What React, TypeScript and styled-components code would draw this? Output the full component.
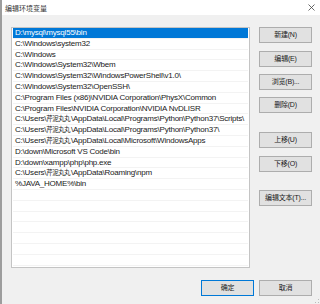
import styled, { createGlobalStyle } from "styled-components";

const GlobalStyle = createGlobalStyle`
  html, body {
    margin: 0;
    padding: 0;
    background: #f0f0f0;
  }
  * {
    box-sizing: border-box;
  }
`;

const Screen = styled.div`
  width: 320px;
  height: 304px;
  display: flex;
  overflow: hidden;
  font-family: "Liberation Sans", "Noto Sans CJK SC", sans-serif;
  font-size: 8px;
  color: #1a1a1a;
`;

const BackEdge = styled.div`
  width: 2px;
  background: #9d9d9d;
`;

const Dialog = styled.div`
  position: relative;
  flex: 1;
  display: flex;
  flex-direction: column;
  background: #f0f0f0;
`;

const TitleBar = styled.div`
  height: 15px;
  display: flex;
  align-items: center;
  justify-content: space-between;
  padding: 0 5px 0 3px;
  background: #ffffff;
  color: #333;
  font-size: 7px;
`;

const Body = styled.div`
  display: flex;
  gap: 9px;
  padding: 12px 8px 0 9px;
`;

const PathList = styled.div`
  width: 239px;
  height: 241px;
  border: 1px solid #c4c4c4;
  background: #ffffff;
  padding: 0 1px;
  overflow: hidden;
`;

const Row = styled.div<{ $selected?: boolean }>`
  height: 10.8px;
  line-height: 10.8px;
  padding-left: 2px;
  white-space: nowrap;
  overflow: hidden;
  letter-spacing: -0.22px;
  border-bottom: 1px solid #f3f3f3;
  background: ${(p) => (p.$selected ? "#0078d7" : "transparent")};
  color: ${(p) => (p.$selected ? "#ffffff" : "#1a1a1a")};
`;

const Cjk = styled.span`
  font-size: 6.5px;
  letter-spacing: -0.6px;
  margin-right: 1px;
`;

const Side = styled.div`
  display: flex;
  flex-direction: column;
`;

const Button = styled.button<{ $top?: number; $focused?: boolean }>`
  width: 53px;
  height: 16px;
  margin-top: ${(p) => p.$top ?? 0}px;
  padding: 0;
  border: 1px solid ${(p) => (p.$focused ? "#0078d7" : "#adadad")};
  background: #e1e1e1;
  font-family: inherit;
  font-size: 7px;
  letter-spacing: -0.2px;
  white-space: nowrap;
  color: #1a1a1a;
  line-height: 14px;
`;

const Footer = styled.div`
  display: flex;
  justify-content: flex-end;
  gap: 5px;
  padding: 12px 8px 0 0;
`;

const Grip = styled.svg`
  position: absolute;
  right: 1px;
  bottom: 1px;
`;

const user = "芹泥丸丸";

const paths: (string | [string, string])[] = [
  "D:\\mysql\\mysql55\\bin",
  "C:\\Windows\\system32",
  "C:\\Windows",
  "C:\\Windows\\System32\\Wbem",
  "C:\\Windows\\System32\\WindowsPowerShell\\v1.0\\",
  "C:\\Windows\\System32\\OpenSSH\\",
  "C:\\Program Files (x86)\\NVIDIA Corporation\\PhysX\\Common",
  "C:\\Program Files\\NVIDIA Corporation\\NVIDIA NvDLISR",
  ["C:\\Users\\", "\\AppData\\Local\\Programs\\Python\\Python37\\Scripts\\"],
  ["C:\\Users\\", "\\AppData\\Local\\Programs\\Python\\Python37\\"],
  ["C:\\Users\\", "\\AppData\\Local\\Microsoft\\WindowsApps"],
  "D:\\down\\Microsoft VS Code\\bin",
  "D:\\down\\xampp\\php\\php.exe",
  ["C:\\Users\\", "\\AppData\\Roaming\\npm"],
  "%JAVA_HOME%\\bin",
  "",
  "",
  "",
  "",
  "",
  "",
  "",
  "",
];

const sideButtons = [
  { label: "新建(N)", top: 0 },
  { label: "编辑(E)", top: 8 },
  { label: "浏览(B)...", top: 7 },
  { label: "删除(D)", top: 7 },
  { label: "上移(U)", top: 19 },
  { label: "下移(O)", top: 8 },
  { label: "编辑文本(T)...", top: 18 },
];

function App() {
  return (
    <>
      <GlobalStyle />
      <Screen>
        <BackEdge />
        <Dialog>
          <TitleBar>
            <span>编辑环境变量</span>
            <svg width="7" height="7" viewBox="0 0 7 7">
              <path d="M0.5 0.5 L6.5 6.5 M6.5 0.5 L0.5 6.5" stroke="#444" strokeWidth="0.8" />
            </svg>
          </TitleBar>
          <Body>
            <PathList>
              {paths.map((p, i) => (
                <Row key={i} $selected={i === 0}>
                  {typeof p === "string" ? (
                    p
                  ) : (
                    <>
                      {p[0]}
                      <Cjk>{user}</Cjk>
                      {p[1]}
                    </>
                  )}
                </Row>
              ))}
            </PathList>
            <Side>
              {sideButtons.map((b) => (
                <Button key={b.label} $top={b.top}>
                  {b.label}
                </Button>
              ))}
            </Side>
          </Body>
          <Footer>
            <Button $focused>确定</Button>
            <Button>取消</Button>
          </Footer>
          <Grip width="4" height="4" viewBox="0 0 4 4">
            <rect x="3" y="0" width="1" height="1" fill="#bbb" />
            <rect x="3" y="3" width="1" height="1" fill="#bbb" />
            <rect x="0" y="3" width="1" height="1" fill="#bbb" />
          </Grip>
        </Dialog>
      </Screen>
    </>
  );
}

export default App;
